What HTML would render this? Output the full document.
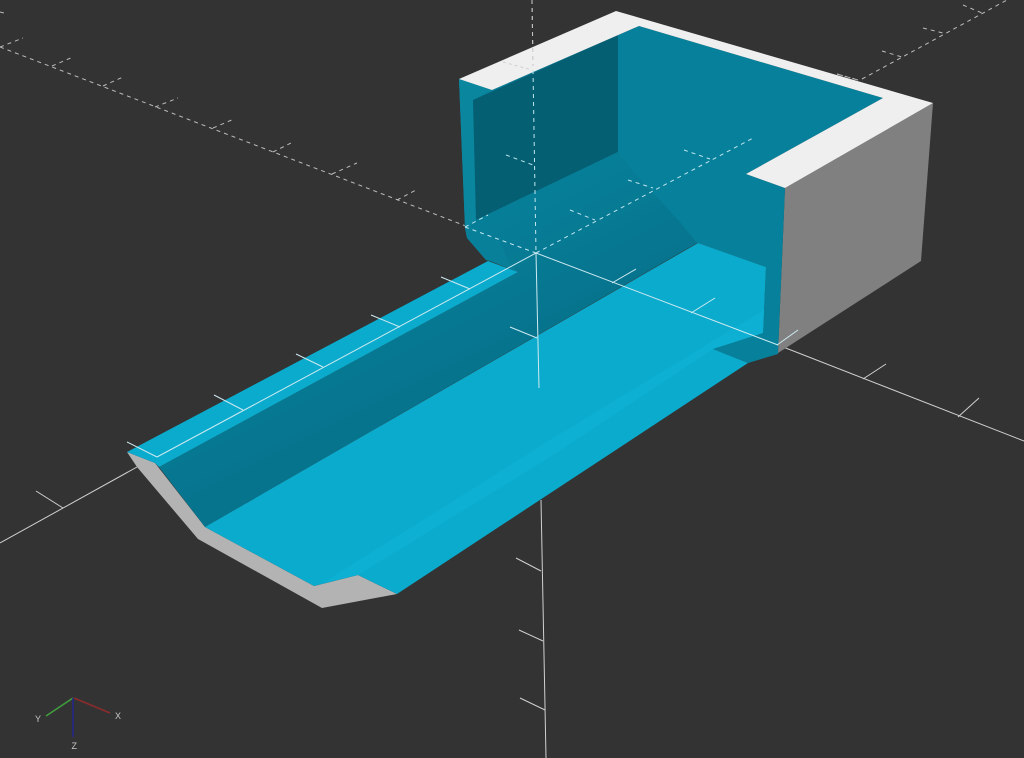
<!DOCTYPE html>
<html>
<head>
<meta charset="utf-8">
<style>
html,body{margin:0;padding:0;width:1024px;height:758px;overflow:hidden;background:#333333}
svg{display:block}
text{font-family:"Liberation Sans",sans-serif;font-size:9px;fill:#c8c8c8}
</style>
</head>
<body>
<svg width="1024" height="758" viewBox="0 0 1024 758" xmlns="http://www.w3.org/2000/svg">
<defs>
<linearGradient id="ramp" gradientUnits="userSpaceOnUse" x1="560" y1="170" x2="620" y2="290">
<stop offset="0" stop-color="#077f99"/>
<stop offset="1" stop-color="#07748e"/>
</linearGradient>
</defs>
<rect width="1024" height="758" fill="#333333"/>

<!-- dashed axes behind model -->
<g stroke="#bdbdbd" stroke-width="1" stroke-dasharray="4 4" fill="none">
<path d="M0 47L536 253"/>
<path d="M862 79L1007 0"/>
<path d="M532 0L536 253"/>
<path d="M0 47L23 38M52 66L73 57M103 86L123 77M155 107L178 98M213 128L234 119M273 152L293 142M332 174L357 163M397 200L418 189"/>
<path d="M837 74L858 80M882 51L902 57M923 28L943 33M963 5L982 13"/>
<path d="M0 12L4 13"/>
</g>

<!-- solid axes behind model -->
<g stroke="#d0d0d0" stroke-width="1" fill="none">
<path d="M0 543L137 467"/>
<path d="M778 345L1024 441"/>
<path d="M541 500L546 758"/>
<path d="M36 491L63 508M516 558L541 571M519 630L543 641M520 698L545 710"/>
<path d="M863 379L886 364M958 417L979 398"/>
</g>

<!-- underside grey -->
<polygon points="127,452 155,463 205,527 314,586 358,575 397,594 322,608 198,539 137,467" fill="#b3b3b3"/>

<!-- right outer face -->
<polygon points="933,103 785,188 778,353 921,261" fill="#808080"/>

<!-- wall silhouette -->
<polygon points="459,79 492,90 639,26 883,98 746,174 785,188 778,353 748,363 713,349 763,333 766,267 698,243 510,267 490,261 486,260 467,238 465,228" fill="#07819b"/>
<!-- left strip -->
<polygon points="459,79 492,90 473,100 476,220 470,226 465,228" fill="#0a869f"/>
<!-- left lower wedge -->
<polygon points="465,228 470,226 500,242 518,272 490,261 486,260 467,238" fill="#08809a"/>
<!-- left inner wall -->
<polygon points="473,100 618,35 618,152 476,220" fill="#055f73"/>
<!-- upper floor and ramp -->
<polygon points="159,467 518,272 510,265 500,242 470,226 476,220 618,152 632,170 657,197 680,222 697,243 205,527" fill="url(#ramp)"/>

<!-- bright strip -->
<polygon points="127,452 488,261 518,272 159,467 155,463" fill="#0babcd"/>
<!-- bright floor -->
<polygon points="205,527 698,243 766,267 763,333 713,349 748,363 397,594 358,575 314,586" fill="#0babcd"/>
<!-- floor lighter band -->
<polygon points="323,583 550,440 764,310 763,333 713,349 550,457 358,575" fill="#0db0d3"/>
<!-- dark triangle -->
<polygon points="763,333 713,349 748,363 778,354 778,330" fill="#07819b"/>

<!-- white top -->
<polygon points="459,79 616,11 933,103 785,188 746,174 883,98 639,26 492,90" fill="#efefef"/>

<!-- faint dashes over white -->
<path d="M503 62L532 70" stroke="#cfcfcf" stroke-width="1" stroke-dasharray="3 3" fill="none"/>
<path d="M837 74L858 80" stroke="#bfbfbf" stroke-width="1" stroke-dasharray="2 2" fill="none"/>
<path d="M532 0L533 66" stroke="#c4c4c4" stroke-width="1" stroke-dasharray="4 4" fill="none"/>

<!-- dashed lines over model -->
<g stroke="#bfe6ee" stroke-width="1" stroke-dasharray="4 4" fill="none">
<path d="M533 70L536 253"/>
<path d="M465 227L536 253"/>
<path d="M536 253L755 137"/>
<path d="M465 227L488 215M506 155L533 165M570 210L595 220M628 180L653 188M684 150L710 159"/>
</g>

<!-- solid lines over model -->
<g stroke="#cdeaf1" stroke-width="1" fill="none">
<path d="M536 253L157 457"/>
<path d="M536 253L778 345"/>
<path d="M536 253L539 388"/>
<path d="M470 289L441 277M400 327L371 315M323 367L296 354M243 410L214 395M157 457L127 442"/>
<path d="M510 327L537 338"/>
<path d="M612 283L636 269M691 313L715 298M777 345L798 330"/>
</g>

<!-- axis gizmo -->
<g fill="none" stroke-width="1.6">
<path d="M74 698L110 713" stroke="#8b2c2c"/>
<path d="M73 698L46 716" stroke="#3fa03f"/>
<path d="M73 698L73 737" stroke="#25288a"/>
</g>
<text x="115" y="719">X</text>
<text x="35" y="722">Y</text>
<text x="71.5" y="749">Z</text>
</svg>
</body>
</html>
